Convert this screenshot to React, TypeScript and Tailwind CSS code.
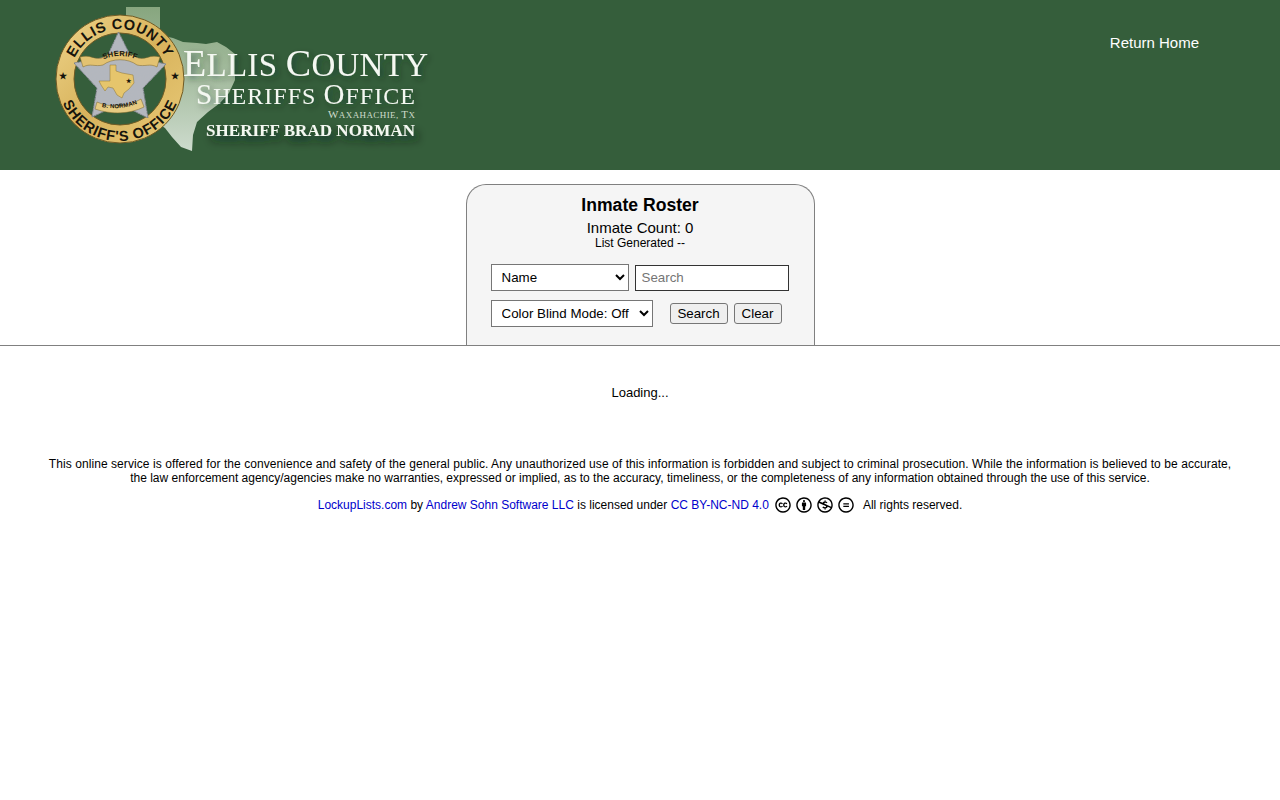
import { FaCreativeCommons, FaCreativeCommonsBy, FaCreativeCommonsNc, FaCreativeCommonsNd } from 'react-icons/fa';

function Logo() {
  return (
    <svg width="400" height="170" viewBox="40 0 400 170" className="block shrink-0">
      <defs>
        <linearGradient id="tx" x1="0" y1="0" x2="0" y2="1">
          <stop offset="0" stopColor="#87a67f" />
          <stop offset="0.45" stopColor="#a3bb9d" />
          <stop offset="1" stopColor="#cddbcd" />
        </linearGradient>
        <linearGradient id="gold" x1="0" y1="0" x2="1" y2="1">
          <stop offset="0" stopColor="#eed48a" />
          <stop offset="0.5" stopColor="#d8b35c" />
          <stop offset="1" stopColor="#e8c977" />
        </linearGradient>
        <filter id="mottle" x="0" y="0" width="100%" height="100%">
          <feTurbulence type="fractalNoise" baseFrequency="0.7" numOctaves="2" seed="4" result="n" />
          <feColorMatrix
            in="n"
            type="matrix"
            values="0 0 0 0 0.45  0 0 0 0 0.47  0 0 0 0 0.52  1.6 0 0 0 -0.6"
            result="spots"
          />
          <feComposite in="spots" in2="SourceAlpha" operator="in" result="clipped" />
          <feMerge>
            <feMergeNode in="SourceGraphic" />
            <feMergeNode in="clipped" />
          </feMerge>
        </filter>
        <filter id="soft" x="-20%" y="-50%" width="140%" height="220%">
          <feDropShadow dx="3" dy="3" stdDeviation="3" floodColor="#10251a" floodOpacity="0.5" />
        </filter>
        <filter id="deep" x="-20%" y="-80%" width="140%" height="300%">
          <feDropShadow dx="4" dy="6" stdDeviation="4" floodColor="#0c1c12" floodOpacity="0.85" />
        </filter>
        <path id="topArc" d="M 70 79 A 50 50 0 0 1 170 79" />
        <path id="bottomArc" d="M 58 79 A 62 62 0 0 0 182 79" />
        <path id="sheriffArc" d="M 98 62 Q 120 50 142 62" />
        <path id="normanArc" d="M 98 106 Q 120 112 141 102" />
      </defs>

      <path
        d="M126 7 L160 7 L160 35 L173 38 L183 42 L197 43 L206 44 L217 42 L226 47 L235 54 L235 70 L235 80 L229 93 L220 103 L208 112 L197 122 L193 135 L192 151 L181 147 L172 137 L165 128 L150 118 L126 60 Z"
        fill="url(#tx)"
      />

      <circle cx="120" cy="79" r="64" fill="url(#gold)" stroke="#6f5a24" strokeWidth="1" />
      <circle cx="120" cy="79" r="46" fill="#355e3b" stroke="#6f5a24" strokeWidth="1" />

      <polygon
        points="118.5,32 131,57 166,64 143,88 148,118 120,104 92,117 97,88 74,63 107,57"
        fill="#b4b7be"
        stroke="#73787f"
        strokeWidth="0.8"
        filter="url(#mottle)"
      />
      <path
        d="M80 57 C 90 54 94 60 102 58 C 112 50 128 50 138 58 C 146 60 150 54 160 57 L 157 67 C 150 63 145 67 137 65 C 128 58 112 58 103 65 C 95 67 90 63 83 67 Z"
        fill="#e3c271"
        stroke="#7d6629"
        strokeWidth="0.5"
      />
      <path
        d="M110 65 L116 65 L116 71 L122 73 L133 75 L134 83 L129 89 L124 93 L122 98 L117 95 L113 88 L108 87 L105 91 L101 85 L99 81 L110 81 Z"
        fill="#e6c56c"
        stroke="#8d7433"
        strokeWidth="0.5"
      />
      <path
        d="M97 102 C 110 108 128 107 141 99 L 144 107 C 130 114 112 115 95 109 Z"
        fill="#e7cb82"
        stroke="#7d6629"
        strokeWidth="0.5"
      />

      <g fontFamily="Liberation Sans, Arial, sans-serif" fontWeight="700" fill="#16140c">
        <text fontSize="14.5" letterSpacing="0.6">
          <textPath href="#topArc" startOffset="50%" textAnchor="middle">ELLIS COUNTY</textPath>
        </text>
        <text fontSize="14.5" letterSpacing="0.8">
          <textPath href="#bottomArc" startOffset="50%" textAnchor="middle">SHERIFF'S OFFICE</textPath>
        </text>
        <text fontSize="7.5" letterSpacing="0.3">
          <textPath href="#sheriffArc" startOffset="50%" textAnchor="middle">SHERIFF</textPath>
        </text>
        <text fontSize="6" letterSpacing="0.2">
          <textPath href="#normanArc" startOffset="50%" textAnchor="middle">B. NORMAN</textPath>
        </text>
        <text x="128" y="83" fontSize="6" textAnchor="middle">★</text>
        <text x="63" y="79" fontSize="9" textAnchor="middle">★</text>
        <text x="175" y="79" fontSize="9" textAnchor="middle">★</text>
      </g>

      <g fontFamily="Liberation Serif, Times New Roman, serif" fill="#f4f8f2">
        <text x="183" y="76" textLength="245" lengthAdjust="spacing" filter="url(#soft)">
          <tspan fontSize="38">E</tspan>
          <tspan fontSize="33" className="uppercase">llis </tspan>
          <tspan fontSize="38">C</tspan>
          <tspan fontSize="33" className="uppercase">ounty</tspan>
        </text>
        <text x="196" y="104" textLength="219" lengthAdjust="spacing" filter="url(#soft)">
          <tspan fontSize="29">S</tspan>
          <tspan fontSize="24" className="uppercase">heriffs </tspan>
          <tspan fontSize="29">O</tspan>
          <tspan fontSize="24" className="uppercase">ffice</tspan>
        </text>
        <text x="328" y="118" textLength="87" lengthAdjust="spacing" fill="#cfdccc">
          <tspan fontSize="11">W</tspan>
          <tspan fontSize="9" className="uppercase">axahachie, </tspan>
          <tspan fontSize="11">T</tspan>
          <tspan fontSize="9" className="uppercase">x</tspan>
        </text>
        <text x="206" y="136" textLength="209" lengthAdjust="spacing" fontSize="17" fontWeight="700" filter="url(#deep)">
          SHERIFF BRAD NORMAN
        </text>
      </g>
    </svg>
  );
}

export default function App() {
  return (
    <div className="min-h-screen bg-white font-['Liberation_Sans',Arial,sans-serif] text-xs text-black">
      <header className="flex h-[170px] justify-between bg-[#355e3b]">
        <div className="pl-10">
          <Logo />
        </div>
        <a href="#" className="pt-[33px] pr-[81px] text-[15px] leading-[19px] text-white">
          Return Home
        </a>
      </header>

      <div className="flex justify-center border-b border-[#808080] pt-3.5">
        <section className="h-[161px] w-[349px] rounded-t-[20px] border border-b-0 border-[#808080] bg-[#f5f5f5] px-6 pt-[10px] text-center">
          <h1 className="text-[17.6px] leading-[20px] font-bold">Inmate Roster</h1>
          <p className="mt-[4px] text-[15px] leading-[18px]">Inmate Count: 0</p>
          <p className="text-xs leading-[12px]">List Generated --</p>

          <div className="mt-[15px] flex items-center gap-1.5">
            <select className="h-[27px] w-[138px] border border-[#767676] bg-white pl-[6px] text-[13.33px] text-black">
              <option>Name</option>
            </select>
            <input
              placeholder="Search"
              className="h-[26px] w-[154px] border border-[#333333] bg-white px-[6px] text-[13.33px] text-black placeholder:text-[#757575]"
            />
          </div>

          <div className="mt-[9px] flex items-center">
            <select className="h-[27px] w-[162px] border border-[#767676] bg-white pl-[6px] text-[13.33px] text-black">
              <option>Color Blind Mode: Off</option>
            </select>
            <button className="ml-[17px] h-[21px] w-[58px] rounded-[3px] border border-[#767676] bg-[#efefef] text-[13.33px] leading-none">
              Search
            </button>
            <button className="ml-1.5 h-[21px] w-12 rounded-[3px] border border-[#767676] bg-[#efefef] text-[13.33px] leading-none">
              Clear
            </button>
          </div>
        </section>
      </div>

      <p className="mt-10 text-center text-[13px] leading-[14px]">Loading...</p>

      <footer className="mt-[57px] px-10 text-center leading-[14px]">
        <p>
          <span className="block tracking-[0.074px] whitespace-nowrap">
            This online service is offered for the convenience and safety of the general public. Any unauthorized use of
            this information is forbidden and subject to criminal prosecution. While the information is believed to be
            accurate,
          </span>
          <span className="block">
            the law enforcement agency/agencies make no warranties, expressed or implied, as to the accuracy,
            timeliness, or the completeness of any information obtained through the use of this service.
          </span>
        </p>
        <div className="mt-3 flex items-center justify-center">
          <span>
            <a href="#" className="text-[#0000cc]">LockupLists.com</a> by{' '}
            <a href="#" className="text-[#0000cc]">Andrew Sohn Software LLC</a> is licensed under{' '}
            <a href="#" className="text-[#0000cc]">CC BY-NC-ND 4.0</a>
          </span>
          <span className="mr-[9px] ml-1.5 flex items-center gap-[5px] text-base">
            <FaCreativeCommons />
            <FaCreativeCommonsBy />
            <FaCreativeCommonsNc />
            <FaCreativeCommonsNd />
          </span>
          <span>All rights reserved.</span>
        </div>
      </footer>
    </div>
  );
}
